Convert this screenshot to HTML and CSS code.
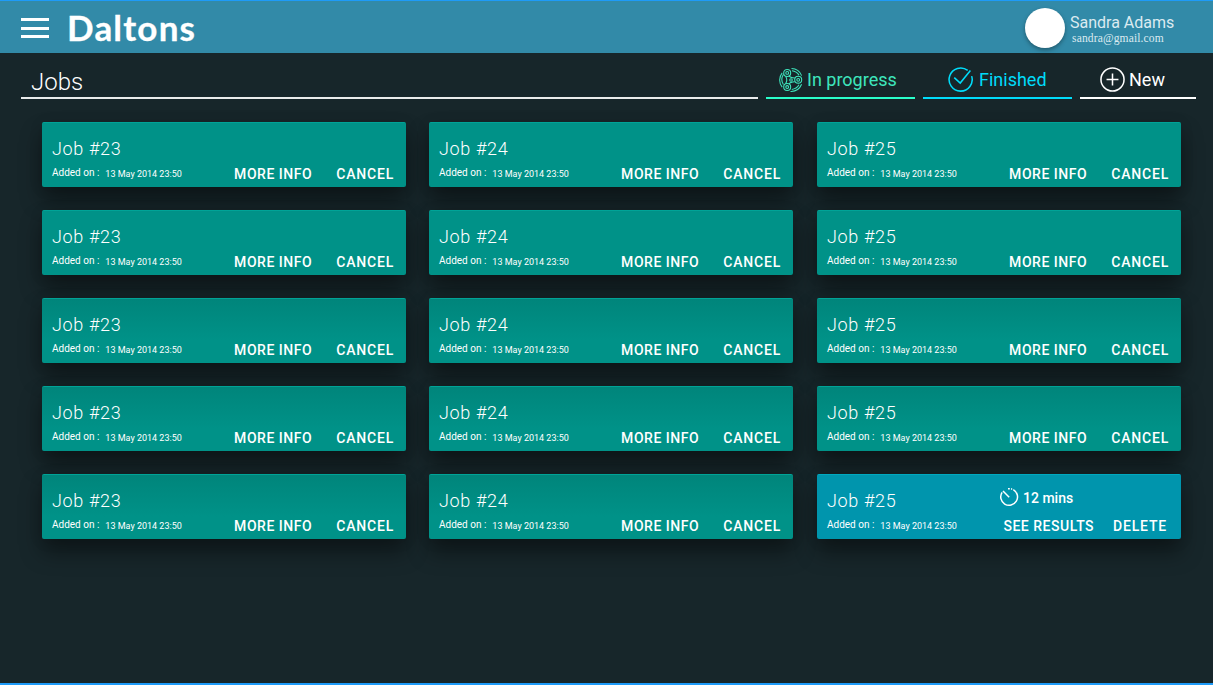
FILE: index.html
```html
<!DOCTYPE html>
<html lang="en">
<head>
<meta charset="utf-8">
<title>Daltons</title>
<link rel="stylesheet" href="styles.css">
</head>
<body>
<div class="app">
<header class="topbar">
  <button class="menu" aria-label="Menu"><i></i><i></i><i></i></button>
  <h1 class="brand">Daltons</h1>
  <div class="avatar"></div>
  <div class="user"><span class="user-name">Sandra Adams</span><span class="user-mail">sandra@gmail.com</span></div>
</header>
<nav class="tabs">
  <div class="heading"><h2>Jobs</h2></div>
  <a class="tab progress">
    <svg width="24" height="24" viewBox="0 0 24 24" fill="none" stroke="currentColor">
      <g stroke-width="1.05">
        <circle cx="8.2" cy="4.9" r="3.5"/><circle cx="8.2" cy="4.9" r="1.4"/>
        <circle cx="19.2" cy="11.8" r="3.5"/><circle cx="19.2" cy="11.8" r="1.4"/>
        <circle cx="8.2" cy="19" r="3.5"/><circle cx="8.2" cy="19" r="1.4"/>
        <circle cx="12" cy="12" r="1.3"/>
        <path d="M6.6 8.300Q9 12 6.600 15.700M10.200 8Q10.800 9.600 15.800 10M10.200 16Q10.800 14.200 15.800 13.800"/>
        <path d="M12.500 .6A11.400 11.400 0 0 1 22.600 7.600M13 2.700A9.500 9.500 0 0 1 20 7.100M3.200 4.800A11.400 11.400 0 0 0 3.200 19.200M4.500 6.200A9.500 9.500 0 0 0 4.400 16.500M22.600 16.300A11.400 11.400 0 0 1 11.500 23.400M20 16.800A9.500 9.500 0 0 1 12.800 21.400"/>
      </g>
    </svg>
    <span>In progress</span></a>
  <a class="tab finished">
    <svg width="25" height="25" viewBox="0 0 26 26" fill="none" stroke="currentColor" stroke-width="1.6">
      <path d="M20.500 3.600A12 12 0 1 0 24.600 9.500M6.500 11l6.200 5.700L23.300 3.600"/>
    </svg>
    <span>Finished</span></a>
  <a class="tab new">
    <svg width="25" height="25" viewBox="0 0 26 26" fill="none" stroke="currentColor" stroke-width="1.6">
      <circle cx="13" cy="13" r="12"/><path d="M13 6.800v12.400M6.800 13h12.400"/>
    </svg>
    <span>New</span></a>
</nav>
<main class="grid">
  <article class="card"><h3>Job #23</h3><p class="meta"><span class="label">Added on :</span><time>13 May 2014 23:50</time></p><div class="actions"><b>MORE INFO</b><b>CANCEL</b></div></article>
  <article class="card"><h3>Job #24</h3><p class="meta"><span class="label">Added on :</span><time>13 May 2014 23:50</time></p><div class="actions"><b>MORE INFO</b><b>CANCEL</b></div></article>
  <article class="card"><h3>Job #25</h3><p class="meta"><span class="label">Added on :</span><time>13 May 2014 23:50</time></p><div class="actions"><b>MORE INFO</b><b>CANCEL</b></div></article>
  <article class="card"><h3>Job #23</h3><p class="meta"><span class="label">Added on :</span><time>13 May 2014 23:50</time></p><div class="actions"><b>MORE INFO</b><b>CANCEL</b></div></article>
  <article class="card"><h3>Job #24</h3><p class="meta"><span class="label">Added on :</span><time>13 May 2014 23:50</time></p><div class="actions"><b>MORE INFO</b><b>CANCEL</b></div></article>
  <article class="card"><h3>Job #25</h3><p class="meta"><span class="label">Added on :</span><time>13 May 2014 23:50</time></p><div class="actions"><b>MORE INFO</b><b>CANCEL</b></div></article>
  <article class="card shaded"><h3>Job #23</h3><p class="meta"><span class="label">Added on :</span><time>13 May 2014 23:50</time></p><div class="actions"><b>MORE INFO</b><b>CANCEL</b></div></article>
  <article class="card shaded"><h3>Job #24</h3><p class="meta"><span class="label">Added on :</span><time>13 May 2014 23:50</time></p><div class="actions"><b>MORE INFO</b><b>CANCEL</b></div></article>
  <article class="card shaded"><h3>Job #25</h3><p class="meta"><span class="label">Added on :</span><time>13 May 2014 23:50</time></p><div class="actions"><b>MORE INFO</b><b>CANCEL</b></div></article>
  <article class="card shaded"><h3>Job #23</h3><p class="meta"><span class="label">Added on :</span><time>13 May 2014 23:50</time></p><div class="actions"><b>MORE INFO</b><b>CANCEL</b></div></article>
  <article class="card shaded"><h3>Job #24</h3><p class="meta"><span class="label">Added on :</span><time>13 May 2014 23:50</time></p><div class="actions"><b>MORE INFO</b><b>CANCEL</b></div></article>
  <article class="card shaded"><h3>Job #25</h3><p class="meta"><span class="label">Added on :</span><time>13 May 2014 23:50</time></p><div class="actions"><b>MORE INFO</b><b>CANCEL</b></div></article>
  <article class="card shaded"><h3>Job #23</h3><p class="meta"><span class="label">Added on :</span><time>13 May 2014 23:50</time></p><div class="actions"><b>MORE INFO</b><b>CANCEL</b></div></article>
  <article class="card shaded"><h3>Job #24</h3><p class="meta"><span class="label">Added on :</span><time>13 May 2014 23:50</time></p><div class="actions"><b>MORE INFO</b><b>CANCEL</b></div></article>
  <article class="card done"><h3>Job #25</h3>
    <div class="duration"><svg width="20" height="20" viewBox="0 0 20 20" fill="none" stroke="currentColor" stroke-width="1.500"><path d="M14.300 2.600A8.400 8.400 0 1 1 3.100 5.300M4 4l6.200 6.200M9 1.800h1.800M12 2h1.200"/></svg><span>12 mins</span></div>
    <p class="meta"><span class="label">Added on :</span><time>13 May 2014 23:50</time></p><div class="actions"><b>SEE RESULTS</b><b>DELETE</b></div></article>
</main>
</div>
</body>
</html>
```
FILE: styles.css
```css
* { box-sizing: border-box; margin: 0; padding: 0; }
body { background: #17262a; color: #fff; font-family: Roboto, sans-serif; overflow: hidden; }
.app { height: 685px; border-top: 1px solid #1e9bf8; border-bottom: 2px solid #1e9bf8; }
.topbar { height: 52px; background: #328aa8; display: flex; padding-left: 21px; }
.menu { flex: none; background: none; border: 0; width: 28px; height: 20px; margin-top: 17px; display: flex; flex-direction: column; justify-content: space-between; }
.menu i { display: block; width: 28px; height: 3px; background: #fff; }
.brand { flex: none; width: 976px; padding-left: 18px; margin-top: 8px; font: 700 35px/36px Lato, sans-serif; letter-spacing: 1.2px; -webkit-text-stroke: .3px #fff; white-space: nowrap; }
.avatar { flex: none; width: 40px; height: 40px; margin-top: 7px; border-radius: 50%; background: #fff; box-shadow: 0 2px 4px rgba(0,0,0,.35); }
.user { margin: 12px 0 0 5px; display: flex; flex-direction: column; color: #dcebf1; white-space: nowrap; }
.user-name { font-size: 16px; line-height: 20px; }
.user-mail { font: 11.5px/12px "Liberation Serif", serif; padding-left: 2px; letter-spacing: .15px; margin-top: -1px; }
.tabs { height: 46px; display: flex; gap: 8px; padding: 0 17px 0 21px; }
.heading { width: 737px; border-bottom: 2px solid #e9ebeb; padding: 15px 0 0 10px; }
.heading h2 { font-weight: 300; font-size: 24px; line-height: 28px; }
.tab { display: flex; align-items: center; border-bottom: 2px solid; width: 149px; font-size: 18px; padding-top: 9px; white-space: nowrap; }
.tab svg { flex: none; }
.progress { color: #3ee6bd; padding-left: 13px; gap: 4px; border-color: #2affcb; }
.finished { color: #00dcfa; padding-left: 25px; gap: 6px; }
.new { width: 116px; padding-left: 20px; gap: 4px; }
.grid { display: grid; grid-template-columns: 364px 365px 364px; gap: 23px; padding: 23px 0 0 42px; }
.card { width: 364px; height: 65px; border-radius: 2px; background: #009288; border-top: 1px solid #00a397; box-shadow: 0 13px 22px rgba(0,0,0,.42), 0 2px 14px rgba(0,0,0,.1); display: grid; grid-template-columns: 170px 1fr; grid-template-rows: 38px 26px; padding: 0 12px 0 10px; white-space: nowrap; }
.shaded { background: linear-gradient(#00857b, #009288 65%); }
.done { background: #0095ad; border-color: #00a9c0; }
.card h3 { grid-row: 1; grid-column: 1; font-weight: 300; font-size: 18px; line-height: 22px; letter-spacing: .65px; margin-top: 15px; }
.meta { grid-row: 2; grid-column: 1; display: flex; gap: 6px; margin-top: 6px; }
.label { font-size: 10px; line-height: 12px; }
.meta time { font-size: 9px; line-height: 14px; }
.actions { grid-row: 2; grid-column: 2; display: flex; justify-content: flex-end; gap: 24px; margin-top: 5px; }
.actions b { font-weight: 500; font-size: 14px; line-height: 16px; letter-spacing: .53px; }
.actions b:last-child { letter-spacing: .8px; }
.done .actions { gap: 19px; padding-right: 2px; }
.duration { grid-row: 1; grid-column: 2; display: flex; align-items: center; gap: 4px; font-weight: 500; font-size: 14px; padding-top: 8px; margin-left: 2px; }
.duration svg { margin-top: -2px; }
```
